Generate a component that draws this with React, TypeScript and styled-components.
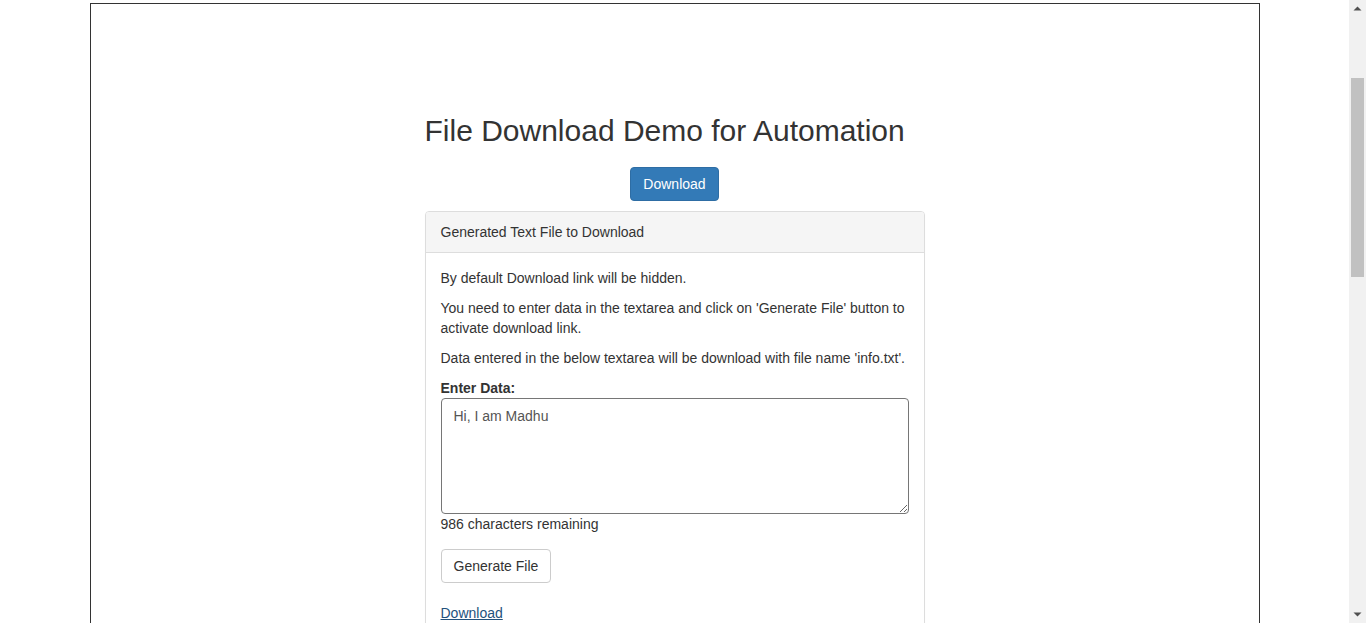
import React, { useLayoutEffect } from "react";
import styled, { createGlobalStyle } from "styled-components";

const GlobalStyle = createGlobalStyle`
  html { scroll-behavior: auto; }
  body {
    margin: 0;
    font-family: "Liberation Sans", Arial, Helvetica, sans-serif;
    font-size: 14px;
    line-height: 1.42857;
    color: #333;
    background: #fff;
  }
  * { box-sizing: border-box; }
`;

const Page = styled.div`
  width: calc(100% - 17px);
  padding-top: 194px;
  min-height: 1844px;
  display: flex;
  flex-direction: column;
`;

const Container = styled.div`
  width: 1170px;
  margin: 0 auto;
  flex: 1;
  border: 1px solid #333;
  padding: 110px 15px 40px;
`;

const Column = styled.div`
  width: 500px;
  margin: 0 auto;
  display: flex;
  flex-direction: column;
`;

const Title = styled.h2`
  margin: 0 0 20px;
  font-size: 30px;
  font-weight: 500;
  line-height: 33px;
  color: #333;
`;

const Btn = styled.button<{ $primary?: boolean }>`
  font-family: inherit;
  font-size: 14px;
  line-height: 20px;
  padding: 6px 12px;
  border-radius: 4px;
  border: 1px solid ${(p) => (p.$primary ? "#2e6da4" : "#ccc")};
  background: ${(p) => (p.$primary ? "#337ab7" : "#fff")};
  color: ${(p) => (p.$primary ? "#fff" : "#333")};
  cursor: pointer;
  align-self: ${(p) => (p.$primary ? "center" : "flex-start")};
`;

const Panel = styled.div`
  margin-top: 10px;
  border: 1px solid #ddd;
  border-radius: 4px;
  box-shadow: 0 1px 1px rgba(0, 0, 0, 0.05);
`;

const PanelHeading = styled.div`
  padding: 11px 15px 9px;
  background: #f5f5f5;
  border-bottom: 1px solid #ddd;
  border-radius: 3px 3px 0 0;
  color: #333;
`;

const PanelBody = styled.div`
  padding: 16px 15px 15px;
  display: flex;
  flex-direction: column;
`;

const Para = styled.p`
  margin: 0 0 10px;
`;

const Label = styled.label`
  font-weight: 700;
  height: 19px;
  line-height: 19px;
`;

const TextArea = styled.textarea`
  display: block;
  width: 100%;
  height: 116px;
  padding: 7px 12px 5px;
  font-family: inherit;
  font-size: 14px;
  line-height: 20px;
  color: #555;
  border: 1px solid #767676;
  border-radius: 4px;
  background: #fff;
`;

const Remaining = styled.div`
  padding-top: 1px;
  height: 20px;
  margin-bottom: 15px;
`;

const Link = styled.a`
  margin-top: 21px;
  color: #23527c;
  text-decoration: underline;
  align-self: flex-start;
`;

const ScrollTrack = styled.div`
  position: fixed;
  top: 0;
  right: 0;
  width: 17px;
  height: 100vh;
  background: #f1f1f1;
  display: flex;
  flex-direction: column;
  align-items: center;
`;

const ScrollArrow = styled.div`
  width: 17px;
  height: 17px;
  display: flex;
  align-items: center;
  justify-content: center;
  flex: none;
`;

const ScrollSpace = styled.div<{ $h?: number }>`
  width: 100%;
  flex: ${(p) => (p.$h ? `0 0 ${p.$h}px` : "1")};
`;

const ScrollThumb = styled.div`
  width: 13px;
  flex: 0 0 199px;
  background: #c1c1c1;
`;

function Scrollbar() {
  return (
    <ScrollTrack aria-hidden="true">
      <ScrollArrow>
        <svg width="9" height="5" viewBox="0 0 9 5">
          <path d="M0.5 4.5 L4.5 0.5 L8.5 4.5 Z" fill="#505050" />
        </svg>
      </ScrollArrow>
      <ScrollSpace $h={61} />
      <ScrollThumb />
      <ScrollSpace />
      <ScrollArrow>
        <svg width="9" height="5" viewBox="0 0 9 5">
          <path d="M0.5 0.5 L8.5 0.5 L4.5 4.5 Z" fill="#505050" />
        </svg>
      </ScrollArrow>
    </ScrollTrack>
  );
}

export default function App() {
  useLayoutEffect(() => {
    window.scrollTo(0, 191);
    const t = setTimeout(() => window.scrollTo(0, 191), 0);
    return () => clearTimeout(t);
  }, []);

  return (
    <>
      <GlobalStyle />
      <Page>
        <Container>
          <Column>
            <Title>File Download Demo for Automation</Title>
            <Btn $primary>Download</Btn>
            <Panel>
              <PanelHeading>Generated Text File to Download</PanelHeading>
              <PanelBody>
                <Para>By default Download link will be hidden.</Para>
                <Para>
                  You need to enter data in the textarea and click on 'Generate File' button to
                  activate download link.
                </Para>
                <Para>
                  Data entered in the below textarea will be download with file name 'info.txt'.
                </Para>
                <Label htmlFor="textbox">Enter Data:</Label>
                <TextArea id="textbox" defaultValue="Hi, I am Madhu" />
                <Remaining>986 characters remaining</Remaining>
                <Btn>Generate File</Btn>
                <Link href="#">Download</Link>
              </PanelBody>
            </Panel>
          </Column>
        </Container>
      </Page>
      <Scrollbar />
    </>
  );
}
